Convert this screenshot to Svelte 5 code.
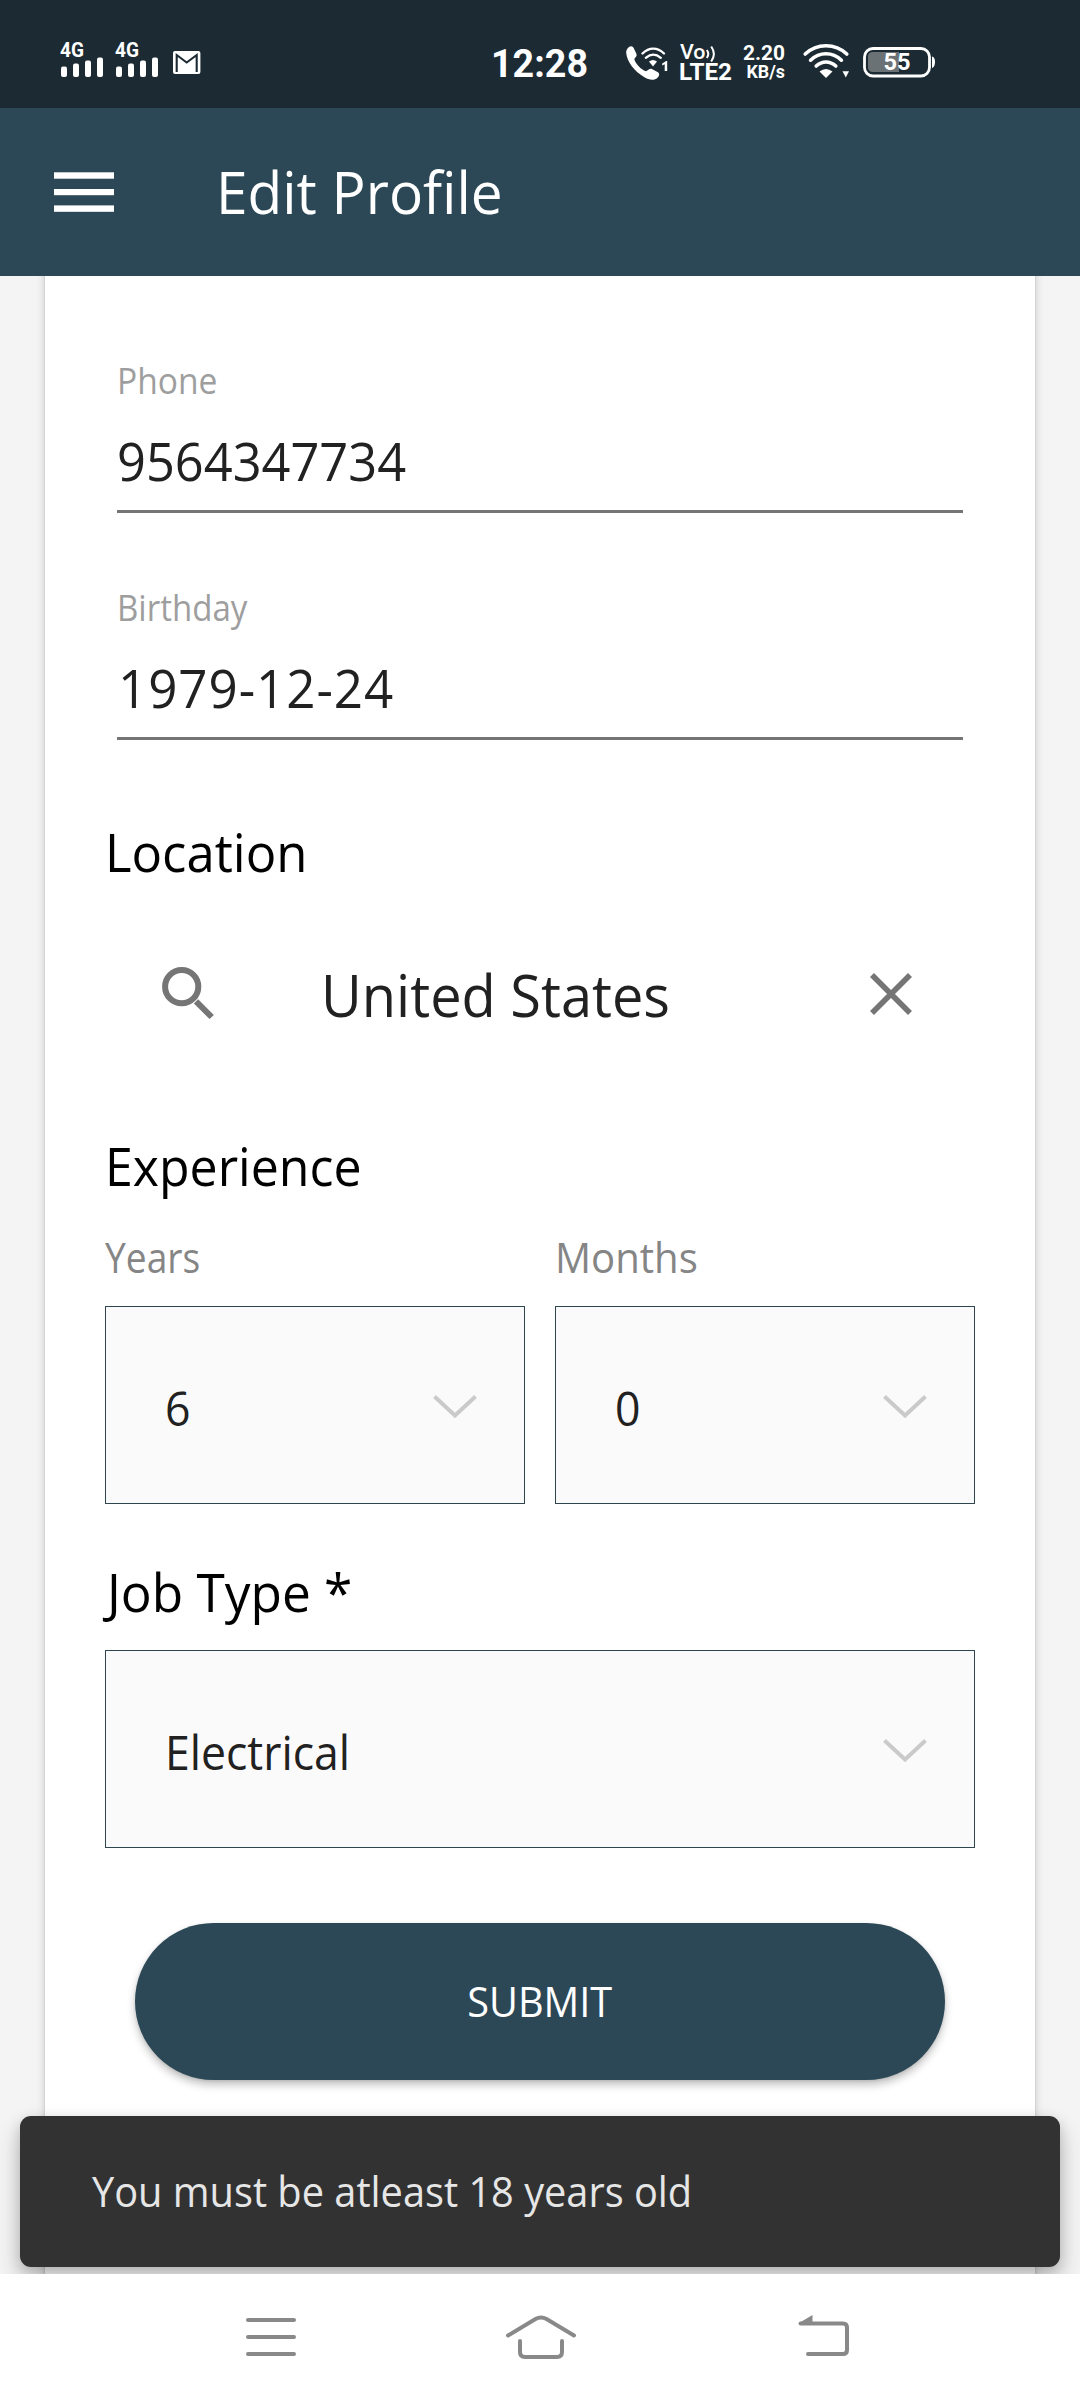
<script>
  const fields = [
    { label: 'Phone', value: '9564347734', kind: 'phone' },
    { label: 'Birthday', value: '1979-12-24', kind: 'birthday' }
  ];
  const experience = [
    { label: 'Years', value: '6', kind: 'years' },
    { label: 'Months', value: '0', kind: 'months' }
  ];
</script>

{#snippet chevron()}
  <svg class="chevron" width="44" height="24" viewBox="0 0 44 24">
    <path d="M1.5 1.500 22 20.500 42.500 1.500" fill="none" stroke="#cacaca" stroke-width="4" />
  </svg>
{/snippet}

{#snippet signal()}
  <svg class="signal" width="45" height="38" viewBox="0 0 45 38" fill="#fff">
    <text x="0" y="17" font-size="20.500" textLength="24" lengthAdjust="spacingAndGlyphs">4G</text>
    <rect x="1" y="26.500" width="6" height="10.500" rx="2" />
    <rect x="13" y="23.500" width="6" height="13.500" rx="2" />
    <rect x="25" y="20.500" width="6" height="16.500" rx="2" />
    <rect x="37" y="17.500" width="6" height="19.500" rx="2" />
  </svg>
{/snippet}

<div class="screen">
  <div class="status">
    {@render signal()}
    {@render signal()}
    <svg class="mail" width="28" height="24" viewBox="0 0 28 24">
      <rect x="0" y="0" width="27.400" height="23" rx="2" fill="#fff" />
      <path d="M3.700 21V4L13.700 11.500 23.700 4V21" fill="none" stroke="#1c2b33" stroke-width="2.100" />
    </svg>
    <svg class="clock" width="98" height="40" viewBox="0 0 98 40" fill="#fff">
      <text x="0" y="34" font-size="38.500" textLength="97" lengthAdjust="spacingAndGlyphs">12:28</text>
    </svg>
    <svg class="call" width="44" height="36" viewBox="0 0 44 36">
      <path d="M3 1C5-.5 7 .5 7.800 2.200L10.500 8C11.300 10 9.300 11.500 8.300 13 9.500 18 15 23.500 20 25.200 22 24.800 23.500 22.200 25.800 23L31.500 26C34 27.300 33.500 30 31.500 31.700 28 35 23 34 18 31 8 25 1 15.500.200 7 0 4.500 1 2.500 3 1Z" fill="#fff" />
      <g fill="none" stroke="#fff" stroke-linecap="round">
        <path d="M16.500 7.500C23 1 31.500 1 38 7.500" stroke-width="2.400" />
        <path d="M19.800 11.800C24.800 7.600 29.800 7.600 34.800 11.800" stroke-width="2.300" />
      </g>
      <path d="M23 15.500Q27 12.500 31 15.500L27 20.500Z" fill="#fff" />
      <path d="M36.200 17.500 40.200 15H41.200V25H38.700V18.200L36.200 19.400Z" fill="#fff" />
    </svg>
    <svg class="volte" width="52" height="38" viewBox="0 0 52 38" fill="#fff">
      <text class="vo" x="0" y="15" font-size="19.500" textLength="25.500" lengthAdjust="spacingAndGlyphs">Vo</text>
      <path d="M26.800 6Q29.800 10 26.800 14M31.200 2.500Q36.600 10 31.200 17.500" fill="none" stroke="#fff" stroke-width="2" />
      <text x="-1" y="36" font-size="23.500" textLength="53" lengthAdjust="spacingAndGlyphs">LTE2</text>
    </svg>
    <svg class="speed" width="43" height="38" viewBox="0 0 43 38" fill="#fff">
      <text x="0" y="16" font-size="20.500" textLength="42" lengthAdjust="spacingAndGlyphs">2.20</text>
      <text x="3.500" y="34" font-size="17.500" textLength="38.500" lengthAdjust="spacingAndGlyphs">KB/s</text>
    </svg>
    <svg class="wifi" width="47" height="35" viewBox="0 0 47 35">
      <g fill="none" stroke="#fff" stroke-width="3.600" stroke-linecap="round">
        <path d="M2.200 10C14 -1 32 -1 43.800 10" />
        <path d="M7.600 16.200C16.500 7.600 29.500 7.600 38.400 16.200" />
        <path d="M13.200 22C19 16.600 27 16.600 32.800 22" />
      </g>
      <path d="M16.500 27.500Q23 22.500 29.500 27.500L23 34Z" fill="#fff" />
      <path d="M39.500 27.200H46L42.800 33.500Z" fill="#fff" />
    </svg>
    <svg class="battery" width="73" height="31" viewBox="0 0 73 31">
      <path d="M10 5H36V25H10Q5 25 5 20V10Q5 5 10 5Z" fill="#6b7275" />
      <rect x="1.500" y="1.500" width="65" height="27.500" rx="8.500" fill="none" stroke="#fff" stroke-width="2.800" />
      <path d="M69 9.500Q72 10 72 15T69 21Z" fill="#fff" />
      <text x="20.500" y="23" font-size="24" fill="#fff" textLength="27" lengthAdjust="spacingAndGlyphs">55</text>
    </svg>
  </div>

  <header class="appbar">
    <svg width="60" height="41" viewBox="0 0 60 41" fill="#fff">
      <rect y=".3" width="60" height="6.400" />
      <rect y="17" width="60" height="6.200" />
      <rect y="33.400" width="60" height="6.400" />
    </svg>
    <h1>Edit Profile</h1>
  </header>

  <main>
    <section class="card">
      {#each fields as field}
        <div class="field {field.kind}">
          <label for={field.kind}><span>{field.label}</span></label>
          <div class="value" id={field.kind}><span>{field.value}</span></div>
        </div>
      {/each}

      <h2 class="location">Location</h2>
      <div class="search">
        <svg class="glass" width="54" height="54" viewBox="0 0 54 54" fill="none" stroke="#757575">
          <circle cx="19.700" cy="19.700" r="16.600" stroke-width="6" />
          <path d="M34 34.300 49.700 50" stroke-width="6" />
        </svg>
        <span class="place">United States</span>
        <svg class="clear" width="42" height="42" viewBox="0 0 42 42">
          <path d="M2 2 40 40M40 2 2 40" stroke="#757575" stroke-width="5.600" />
        </svg>
      </div>

      <h2 class="experience">Experience</h2>
      <div class="pair">
        {#each experience as item}
          <div class="column {item.kind}">
            <div class="caption"><span>{item.label}</span></div>
            <div class="select"><span>{item.value}</span>{@render chevron()}</div>
          </div>
        {/each}
      </div>

      <h2 class="job">Job Type *</h2>
      <div class="select wide"><span>Electrical</span>{@render chevron()}</div>

      <button><span>SUBMIT</span></button>
    </section>

    <div class="toast"><span>You must be atleast 18 years old</span></div>
  </main>

  <nav>
    <svg width="50" height="44" viewBox="0 0 50 44" stroke="#898989" stroke-width="4" stroke-linecap="round">
      <path d="M2 5H48M2 22H48M2 39H48" />
    </svg>
    <svg class="home" width="70" height="44" viewBox="0 0 70 44" fill="none" stroke="#898989" stroke-width="4" stroke-linecap="round" stroke-linejoin="round">
      <path d="M2 20.500 29.500 4Q35 .8 40.500 4L68 20.500" />
      <path d="M14 26V37Q14 42 19 42H51Q56 42 56 37V26" />
    </svg>
    <svg class="back" width="52" height="44" viewBox="0 0 52 44" fill="none" stroke="#898989" stroke-width="4" stroke-linecap="round">
      <path d="M2.500 8.500H45Q49 8.500 49 12.500V35Q49 39 45 39H10" />
      <path d="M1 8 14.500 0V9Z" fill="#898989" stroke="none" />
    </svg>
  </nav>
</div>

<style>
  :global(body) {
    margin: 0;
  }
  .screen {
    width: 1080px;
    height: 2400px;
    display: flex;
    flex-direction: column;
    overflow: hidden;
    background: #fff;
    font-family: "Open Sans", "Noto Sans", sans-serif;
  }
  svg {
    display: block;
    flex: none;
    overflow: visible;
  }
  span,
  h1,
  h2 {
    display: block;
    width: max-content;
    white-space: nowrap;
    transform-origin: left center;
  }

  .status {
    flex: none;
    box-sizing: border-box;
    height: 108px;
    padding: 40px 0 0 60px;
    display: flex;
    align-items: flex-start;
    background: #1c2b33;
  }
  .status text {
    font-family: Roboto, sans-serif;
    font-weight: 700;
  }
  .status .vo {
    font-weight: 500;
  }
  .signal {
    margin-right: 10px;
  }
  .mail {
    margin: 11px 0 0 3px;
  }
  .clock {
    margin: 3px 0 0 290px;
  }
  .call {
    margin: 6px 0 0 37px;
  }
  .volte {
    margin: 4px 0 0 10px;
  }
  .speed {
    margin: 4px 0 0 11px;
  }
  .wifi {
    margin: 4px 0 0 17px;
  }
  .battery {
    margin: 7px 0 0 13px;
  }

  .appbar {
    flex: none;
    height: 168px;
    padding-left: 54px;
    display: flex;
    align-items: center;
    background: #2c4856;
    color: #fff;
  }
  h1 {
    margin: 0 0 0 102px;
    font-size: 59px;
    line-height: 80px;
    font-weight: 400;
    transform: translateY(-1px) scaleX(0.962);
  }

  main {
    flex: none;
    height: 1998px;
    position: relative;
    overflow: hidden;
    background: #f4f4f4;
  }
  .card {
    box-sizing: border-box;
    height: 2100px;
    margin: -20px 45px 0;
    padding: 99px 60px 0;
    background: #fff;
    box-shadow: 0 3px 9px rgba(0, 0, 0, 0.18), 0 0 2px rgba(0, 0, 0, 0.14);
  }
  .field {
    margin: 0 12px 69px;
    border-bottom: 3px solid #757575;
  }
  .field.birthday {
    margin-bottom: 75px;
  }
  label {
    display: block;
    font-size: 36.5px;
    line-height: 50px;
    color: #9e9e9e;
  }
  .phone label span {
    transform: scaleX(0.92);
  }
  .birthday label span {
    transform: scaleX(0.905);
  }
  .value {
    padding: 19px 0 12px;
    font-size: 53.5px;
    line-height: 74px;
    color: #212121;
  }
  .value span {
    transform: scaleX(0.945);
  }
  .birthday .value span {
    letter-spacing: 1px;
    transform: translateX(1px) scaleX(0.955);
  }

  h2 {
    margin: 0;
    font-size: 53.5px;
    line-height: 74px;
    font-weight: 400;
    color: #000;
  }
  .location {
    transform: scaleX(0.95);
  }
  .experience {
    transform: scaleX(0.935);
  }
  .job {
    margin-top: 51px;
    transform: translateX(2px) scaleX(0.96);
  }
  .search {
    margin: 64px 63px 96px 56px;
    height: 80px;
    display: flex;
    align-items: flex-start;
  }
  .glass {
    margin: 14px 0 0 1px;
  }
  .place {
    margin-left: 105px;
    font-size: 59px;
    line-height: 80px;
    color: #212121;
    transform: translateY(1px) scaleX(0.948);
  }
  .clear {
    margin: 20px 0 0 auto;
  }

  .pair {
    display: grid;
    grid-template-columns: 1fr 1fr;
    gap: 30px;
    margin-top: 25px;
  }
  .caption {
    margin-bottom: 20px;
    font-size: 42px;
    line-height: 58px;
    color: #858585;
  }
  .years .caption span {
    transform: scaleX(0.885);
  }
  .months .caption span {
    transform: scaleX(0.955);
  }
  .select {
    box-sizing: border-box;
    height: 198px;
    padding: 6px 47px 0 59px;
    display: flex;
    align-items: center;
    justify-content: space-between;
    border: 1px solid #2f4650;
    background: #fafafa;
    font-size: 47px;
    color: #212121;
  }
  .select span {
    transform: scaleX(0.948);
  }
  .chevron {
    margin-top: -3px;
  }
  .wide {
    margin-top: 21px;
  }

  button {
    display: flex;
    align-items: center;
    justify-content: center;
    width: 810px;
    height: 157px;
    margin: 75px 30px 0;
    padding: 0;
    border: 0;
    border-radius: 79px;
    background: #2c4856;
    box-shadow: 0 5px 9px rgba(0, 0, 0, 0.24), 0 1px 3px rgba(0, 0, 0, 0.1);
    font-family: inherit;
    font-size: 42px;
    color: #fff;
  }
  button span {
    transform: translateY(-1px) scaleX(0.945);
    transform-origin: center;
  }

  .toast {
    position: absolute;
    left: 20px;
    top: 1840px;
    box-sizing: border-box;
    width: 1040px;
    height: 151px;
    padding-left: 72px;
    display: flex;
    align-items: center;
    border-radius: 11px;
    background: #323232;
    box-shadow: 0 14px 26px rgba(0, 0, 0, 0.2), 0 4px 14px rgba(0, 0, 0, 0.16);
    font-size: 42px;
    color: #e6e6e6;
  }
  .toast span {
    transform: translateY(-1px) scaleX(0.946);
  }

  nav {
    flex: none;
    box-sizing: border-box;
    height: 126px;
    padding: 41px 0 0 246px;
    display: flex;
    align-items: flex-start;
    background: #fff;
  }
  .home {
    margin-left: 210px;
  }
  .back {
    margin-left: 222px;
  }
</style>
